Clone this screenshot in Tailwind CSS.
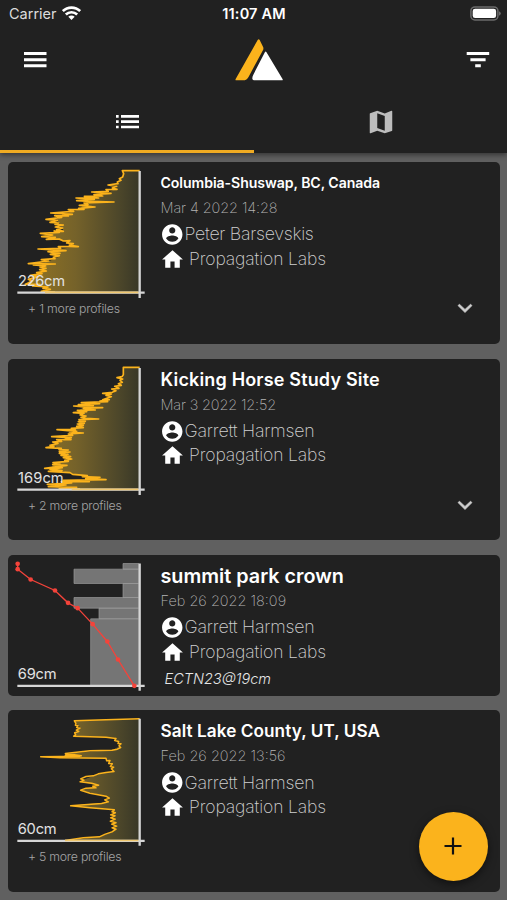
<!DOCTYPE html>
<html lang="en">

<head>
  <meta charset="UTF-8" />
  <meta name="viewport" content="width=device-width, initial-scale=1.0" />
  <title>Snow Profiles</title>
  <script src="https://cdn.jsdelivr.net/npm/@tailwindcss/browser@4"></script>
</head>

<body class="h-[900px] overflow-hidden bg-[#606060] font-['Inter',sans-serif] text-white antialiased">

  <!-- Shared icons and gradient -->
  <svg class="hidden">
    <symbol id="account" viewBox="0 0 24 24">
      <path fill="currentColor" d="M12 2C6.48 2 2 6.48 2 12s4.48 10 10 10 10-4.48 10-10S17.52 2 12 2zm0 3c1.66 0 3 1.34 3 3s-1.34 3-3 3-3-1.34-3-3 1.34-3 3-3zm0 14.2c-2.5 0-4.71-1.28-6-3.22.03-1.99 4-3.08 6-3.08 1.99 0 5.97 1.09 6 3.08-1.29 1.94-3.5 3.22-6 3.22z" />
    </symbol>
    <symbol id="home" viewBox="0 0 24 24">
      <path fill="currentColor" d="M10 20v-6h4v6h5v-8h3L12 3 2 12h3v8z" />
    </symbol>
    <symbol id="chevron" viewBox="0 0 24 24">
      <path fill="currentColor" stroke="currentColor" stroke-width=".7" d="M6.400 8.200 12 13.400l5.600-5.200L19 9.600l-7 6.900-7-6.900z" />
    </symbol>
  </svg>
  <svg class="absolute h-0 w-0">
    <defs>
      <linearGradient id="fade" gradientUnits="userSpaceOnUse" x1="100" y1="0" x2="419" y2="0">
        <stop offset="0" stop-color="#8f7224" />
        <stop offset="0.4" stop-color="#75622a" />
        <stop offset="0.8" stop-color="#4d472a" />
        <stop offset="1" stop-color="#383727" />
      </linearGradient>
    </defs>
  </svg>

  <!-- Header -->
  <header class="relative z-10 h-[153px] bg-[#212121] shadow-[0_2px_5px_rgba(0,0,0,0.45)]">
    <div class="grid h-7 grid-cols-3 items-center pr-[6px] pl-[9px] text-[14.500px]">
      <div class="flex items-center gap-[5px] text-[#dcdcdc]">
        <span>Carrier</span>
        <svg class="mb-[2px] h-[14px] w-[19px]" viewBox="0 0 57 42" fill="none" stroke="#fff" stroke-width="8">
          <path d="M2.500 15.500A37 37 0 0 1 54.500 15.500" />
          <path d="M11.500 25.500A24.500 24.500 0 0 1 45.500 25.500" />
          <path d="M28.500 42 19 32.500a13.500 13.500 0 0 1 19 0z" fill="#fff" stroke="none" />
        </svg>
      </div>
      <div class="pr-[2px] text-center font-semibold tracking-[0.2px] whitespace-nowrap">11:07 AM</div>
      <svg class="mb-[2px] h-[15px] w-[31px] justify-self-end" viewBox="0 0 31 15">
        <rect x="0.900" y="0.900" width="27" height="13" rx="4" fill="none" stroke="#6b6b6b" stroke-width="1.500" />
        <rect x="2.700" y="2.700" width="23.400" height="9.400" rx="2.400" fill="#fff" />
        <path d="M29 5.200v4.600q1.800-.8 1.800-2.300T29 5.200z" fill="#6b6b6b" />
      </svg>
    </div>

    <div class="flex h-16 items-center justify-between px-[23px]">
      <svg class="h-4 w-6" viewBox="0 0 24 16" fill="#fff">
        <path d="M1 0h22.500v3H1zM1 6.200h22.500v3H1zM1 12.300h22.500v3H1z" />
      </svg>
      <svg class="ml-[4px] h-[42px] w-12" viewBox="0 0 144 126">
        <path d="M68 3q3-5 6 0l10 20q3 6-1 12L41 113q-5 11-17 11H4q-4 0-2-4z" fill="#fbb31c" />
        <path d="M90 39q2-3 4 0l49 82q1 3-2 3H61q-10 0-9-7 0-4 3-10z" fill="#fff" />
      </svg>
      <svg class="-mr-[6px] h-4 w-6" viewBox="0 0 24 16" fill="#fff">
        <path d="M.7 0H23.200v3H.7zM4.400 6.200h15.200v3H4.400zM9.200 12.300h5.600v3H9.200z" />
      </svg>
    </div>

    <div class="grid h-[61px] grid-cols-2">
      <div class="flex items-center justify-center border-b-3 border-[#f0ab22]">
        <svg class="mt-[2px] ml-[2px] h-[14px] w-[23px]" viewBox="0 0 69 42" fill="#fff">
          <path d="M0 0h8v8H0zM15 0h54v8H15zM0 16h8v8H0zM15 16h54v8H15zM0 32h8v8H0zM15 32h54v8H15z" />
        </svg>
      </div>
      <div class="flex items-center justify-center">
        <svg class="mb-[2px] ml-px h-[30px] w-[30px]" viewBox="0 0 24 24" fill="#bdbdbd">
          <path d="M20.500 3l-.16.03L15 5.100 9 3 3.360 4.900c-.21.07-.36.25-.36.480V20.500c0 .28.22.5.5.5l.16-.03L9 18.900l6 2.100 5.640-1.900c.21-.07.36-.25.36-.48V3.500c0-.28-.22-.5-.5-.5zM15 19l-6-2.110V5l6 2.110V19z" />
        </svg>
      </div>
    </div>
  </header>

  <!-- Profile list -->
  <main class="flex flex-col gap-[14.800px] pt-[9px] pr-[7.500px] pl-2">

    <article class="flex h-[181.800px] shrink-0 rounded-[5px] bg-[#212121]">
      <div class="w-[152.500px]">
        <svg class="h-[138px] w-[140px]" viewBox="24 21 420 414">
          <path fill="url(#fade)" d="M419 48H368V65L360 76 352 86 346 101 330 110 310 120 290 128 265 137 250 150 240 162 215 170 195 178 180 186 170 196 182 210 190 226 160 233 130 240 155 252 190 257 212 268 232 275 170 283 150 297 175 306 150 317 125 325 133 345 110 355 90 372 82 390 110 393 140 400 128 411H419z" />
          <path fill="none" stroke="#fbb31c" stroke-width="5" stroke-linejoin="round" d="M419 47H367L371 56 368 66 358 71 363 76 352 81 354 86 324 90 350 94 337 99 351 103 318 104 325 109 275 111 333 115 282 119 308 123 253 124 296 129 228 129 283 133 230 137 270 139 342 141 252 144 264 149 238 151 285 156 236 160 252 163 205 164 221 169 152 174 217 178 188 180 205 183 164 182 185 187 138 193 172 196 150 202 176 204 165 208 190 210 166 216 188 219 170 224 190 229 162 228 178 232 121 235 158 240 125 245 166 247 139 253 178 252 190 258 210 257 200 264 220 266 208 270 235 275 175 275 182 280 114 282 198 287 144 290 180 295 151 298 178 302 160 307 165 311 124 314 146 318 85 326 166 327 100 330 137 333 120 336 138 340 119 344 139 348 110 353 126 356 91 361 115 365 85 373 97 379 76 388 120 388 98 393 144 396 129 400 151 403 124 409 165 411" />
          <path stroke="#d6d6d6" stroke-width="7" d="M419 48V429M52 413H434" />
          <path stroke="#f0c870" stroke-width="5" d="M135 412H415" />
          <text x="54" y="393" fill="#e2e2e2" font-size="44" textLength="141">226cm</text>
        </svg>
        <p class="ml-5 text-[12.300px] leading-[18px] font-light tracking-[-0.18px] text-[#a5a5a5]">+ 1 more profiles</p>
      </div>
      <div class="flex-1 whitespace-nowrap">
        <h2 class="mt-2 h-[26px] text-[14.100px] leading-[26px] font-semibold tracking-[-0.06px]">Columbia-Shuswap, BC, Canada</h2>
        <p class="h-6 text-[14.500px] leading-6 font-extralight tracking-[-0.1px] text-[#b4b4b4]">Mar 4 2022 14:28</p>
        <p class="mt-[2px] flex h-[25px] items-center text-[17.800px] font-extralight tracking-[-0.3px] text-[#d0d0d0]"><svg class="-ml-[0.500px] h-[25px] w-[24.500px] text-white"><use href="#account" /></svg>Peter Barsevskis</p>
        <p class="flex h-6 items-center text-[17.500px] font-extralight tracking-[-0.12px] text-[#d0d0d0]"><svg class="mr-1 -ml-[0.500px] h-[25px] w-[25px] text-white"><use href="#home" /></svg>Propagation Labs</p>
      </div>
      <svg class="mt-[134px] mr-[23px] h-6 w-6 text-[#d0d0d0]"><use href="#chevron" /></svg>
    </article>

    <article class="flex h-[181.800px] shrink-0 rounded-[5px] bg-[#212121]">
      <div class="w-[152.500px]">
        <svg class="h-[138px] w-[140px]" viewBox="24 21 420 414">
          <path fill="url(#fade)" d="M419 47H370V74L360 96 345 118 330 138 305 150 270 160 240 172 250 184 250 198 240 215 225 235 205 257 160 280 180 292 200 303 208 322 165 335 150 350 195 360 245 370 290 382 200 390 165 405 220 411H419z" />
          <path fill="none" stroke="#fbb31c" stroke-width="5" stroke-linejoin="round" d="M419 46H370V68L366 74 351 77 368 81 360 85 367 91 355 95 364 100 344 103 357 109 335 111 348 116 337 121 308 124 335 126 318 130 334 134 322 138 308 143 328 143 300 147 323 149 244 152 299 155 235 158 280 161 221 162 270 166 308 167 250 169 286 174 232 175 260 179 220 182 252 184 240 189 258 192 243 196 258 199 296 201 237 203 256 208 235 209 253 214 232 216 250 220 230 223 250 227 214 229 226 233 171 233 230 238 208 240 250 243 205 246 218 250 155 254 214 257 196 259 213 263 170 263 185 268 158 270 174 274 150 280 162 283 138 287 184 289 177 293 205 294 178 299 210 300 178 304 204 307 183 310 212 314 190 317 215 321 194 325 205 328 159 332 180 336 158 338 201 340 134 349 187 347 150 352 186 356 145 358 210 362 218 367 262 371 247 374 300 376 257 380 318 383 190 385 268 389 184 389 215 393 142 397 198 399 145 404 230 406 178 410 240 411" />
          <path stroke="#d6d6d6" stroke-width="7" d="M419 48V429M52 413H434" />
          <path stroke="#f0c870" stroke-width="5" d="M215 412H415" />
          <text x="54" y="392" fill="#e2e2e2" font-size="44" textLength="137">169cm</text>
        </svg>
        <p class="ml-5 text-[12.300px] leading-[18px] font-light tracking-[-0.24px] text-[#a5a5a5]">+ 2 more profiles</p>
      </div>
      <div class="flex-1 whitespace-nowrap">
        <h2 class="mt-2 h-[26px] text-[18px] leading-[26px] font-semibold tracking-[0.170px]">Kicking Horse Study Site</h2>
        <p class="h-6 text-[14.500px] leading-6 font-extralight tracking-[-0.16px] text-[#b4b4b4]">Mar 3 2022 12:52</p>
        <p class="mt-[2px] flex h-[25px] items-center text-[17.800px] font-extralight tracking-[-0.200px] text-[#d0d0d0]"><svg class="-ml-[0.500px] h-[25px] w-[24.500px] text-white"><use href="#account" /></svg>Garrett Harmsen</p>
        <p class="flex h-6 items-center text-[17.500px] font-extralight tracking-[-0.12px] text-[#d0d0d0]"><svg class="mr-1 -ml-[0.500px] h-[25px] w-[25px] text-white"><use href="#home" /></svg>Propagation Labs</p>
      </div>
      <svg class="mt-[134px] mr-[23px] h-6 w-6 text-[#d0d0d0]"><use href="#chevron" /></svg>
    </article>

    <article class="flex h-[140.500px] shrink-0 rounded-[5px] bg-[#212121]">
      <div class="w-[152.500px]">
        <svg class="h-[138px] w-[140px]" viewBox="24 16.500 420 414">
          <g fill="#757575" stroke="#9a9a9a" stroke-width="2">
            <path d="M369 42H416V59H369zM222 59H416V102H222zM369 102H416V144H369zM222 144H416V176H222zM297 176H416V208H297zM272 208H416V408H272z" />
          </g>
          <path stroke="#d6d6d6" stroke-width="7" d="M419 42V424M52 409H434" />
          <path fill="none" stroke="#f4433a" stroke-width="4" d="M53 43V59L92 90 165 123 204 160 233 176 278 224 322 276 354 330 403 409" />
          <g fill="#f4433a">
            <circle cx="53" cy="43" r="7" />
            <circle cx="53" cy="59" r="7" />
            <circle cx="92" cy="90" r="7" />
            <circle cx="165" cy="123" r="7" />
            <circle cx="204" cy="160" r="7" />
            <circle cx="233" cy="176" r="7" />
            <circle cx="278" cy="224" r="7" />
            <circle cx="322" cy="276" r="7" />
            <circle cx="354" cy="330" r="7" />
            <circle cx="403" cy="409" r="7" />
          </g>
          <text x="53" y="388" fill="#e2e2e2" font-size="44" textLength="117">69cm</text>
        </svg>
      </div>
      <div class="flex-1 whitespace-nowrap">
        <h2 class="mt-2 h-[26px] text-[19.800px] leading-[26px] font-semibold">summit park crown</h2>
        <p class="h-6 text-[14.500px] leading-6 font-extralight text-[#b4b4b4]">Feb 26 2022 18:09</p>
        <p class="mt-[2px] flex h-[25px] items-center text-[17.800px] font-extralight tracking-[-0.200px] text-[#d0d0d0]"><svg class="-ml-[0.500px] h-[25px] w-[24.500px] text-white"><use href="#account" /></svg>Garrett Harmsen</p>
        <p class="flex h-6 items-center text-[17.500px] font-extralight tracking-[-0.12px] text-[#d0d0d0]"><svg class="mr-1 -ml-[0.500px] h-[25px] w-[25px] text-white"><use href="#home" /></svg>Propagation Labs</p>
        <p class="mt-[5px] ml-1 text-[14.500px] leading-5 font-light text-[#e6e6e6] italic">ECTN23@19cm</p>
      </div>
    </article>

    <article class="flex h-[181.800px] shrink-0 rounded-[5px] bg-[#212121]">
      <div class="w-[152.500px]">
        <svg class="h-[138px] w-[140px]" viewBox="24 16.500 420 414">
          <path fill="url(#fade)" d="M419 43 222 49 240 68 222 95 344 99 361 122 340 136 195 148 244 154 122 158 315 162 335 180 341 202 295 208 240 230 290 243 244 257 320 276 321 293 210 304 340 316 340 378 300 396 195 409H419z" />
          <path fill="none" stroke="#fbb31c" stroke-width="4.500" stroke-linejoin="round" d="M419 43 370 44 318 46 223 49 228 57 226 62 234 64 230 69 240 71 229 77 236 81 224 85 227 91 221 95 270 97 318 98 348 102 344 108 356 111 354 117 363 118 357 124 362 129 352 134 336 137 270 139 196 147 244 154 196 152 240 155 122 157 180 160 318 161 320 169 330 168 326 177 337 178 331 186 341 188 334 193 342 201 318 204 295 208 280 214 258 216 242 223 252 227 240 232 275 236 296 242 278 245 288 250 258 251 242 257 270 266 318 275 328 281 314 286 325 292 305 297 212 304 270 310 343 316 336 322 346 325 332 331 345 334 332 340 346 344 331 350 348 355 335 359 350 365 336 370 348 374 336 382 316 389 298 397 250 400 195 408" />
          <path stroke="#d6d6d6" stroke-width="7" d="M419 43V424M52 409H434" />
          <path stroke="#f0c870" stroke-width="5" d="M195 408H415" />
          <text x="53" y="389" fill="#e2e2e2" font-size="44" textLength="117">60cm</text>
        </svg>
        <p class="ml-5 text-[12.300px] leading-[18px] font-light tracking-[-0.24px] text-[#a5a5a5]">+ 5 more profiles</p>
      </div>
      <div class="flex-1 whitespace-nowrap">
        <h2 class="mt-2 h-[26px] text-[17.200px] leading-[26px] font-semibold tracking-[0.060px]">Salt Lake County, UT, USA</h2>
        <p class="h-6 text-[14.500px] leading-6 font-extralight text-[#b4b4b4]">Feb 26 2022 13:56</p>
        <p class="mt-[2px] flex h-[25px] items-center text-[17.800px] font-extralight tracking-[-0.200px] text-[#d0d0d0]"><svg class="-ml-[0.500px] h-[25px] w-[24.500px] text-white"><use href="#account" /></svg>Garrett Harmsen</p>
        <p class="flex h-6 items-center text-[17.500px] font-extralight tracking-[-0.12px] text-[#d0d0d0]"><svg class="mr-1 -ml-[0.500px] h-[25px] w-[25px] text-white"><use href="#home" /></svg>Propagation Labs</p>
      </div>
    </article>
  </main>

  <!-- Add button -->
  <button class="fixed top-[812px] left-[418.500px] z-20 flex h-[69px] w-[69px] items-center justify-center rounded-full bg-[#fbb31c] shadow-[0_3px_8px_rgba(0,0,0,0.5)]">
    <svg class="mb-px h-[18px] w-[18px]" viewBox="0 0 18 18" stroke="#111" stroke-width="2.200">
      <path d="M9 .5v17M.5 9h17" />
    </svg>
  </button>

</body>

</html>
